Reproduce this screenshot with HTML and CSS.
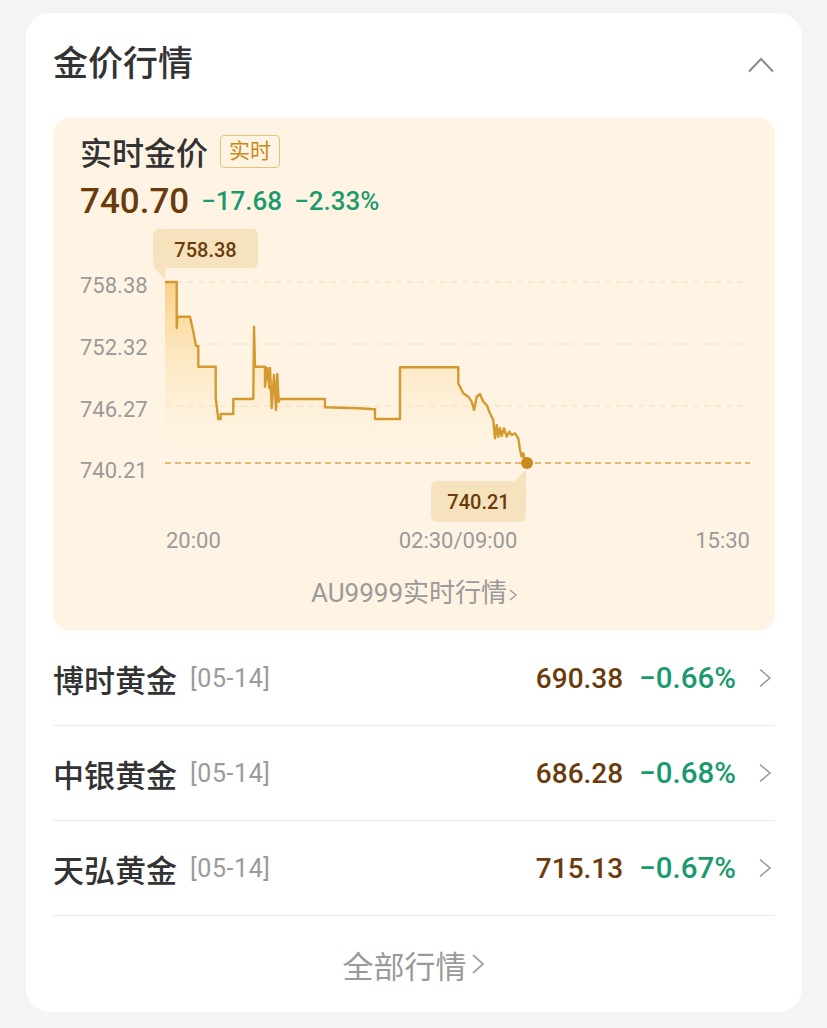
FILE: index.html
```html
<!DOCTYPE html>
<html lang="zh-CN">
<head>
  <meta charset="UTF-8" />
  <meta name="viewport" content="width=device-width, initial-scale=1" />
  <title>金价行情</title>
  <link rel="stylesheet" href="styles.css">
</head>
<body>
  <div class="card">
    <div class="card-head">
      <h2 class="card-title">金价行情</h2>
      <svg class="fold" width="26" height="16" viewBox="0 0 26 16">
        <polyline points="1,14.5 13,2 25,14.5" fill="none" stroke="#8c8c8c" stroke-width="2" />
      </svg>
    </div>

    <div class="live">
      <div class="live-head">
        <span class="live-title">实时金价</span>
        <span class="tag">实时</span>
      </div>
      <div class="live-price">
        <span class="now">740.70</span>
        <span class="chg">−17.68</span>
        <span class="chg">−2.33%</span>
      </div>

      <svg class="chart" width="670" height="300" viewBox="0 0 670 300">
        <defs>
          <linearGradient id="area" x1="0" y1="56" x2="0" y2="237" gradientUnits="userSpaceOnUse">
            <stop offset="0" stop-color="#f7c56a" stop-opacity="0.75" />
            <stop offset="0.7" stop-color="#fbe2b0" stop-opacity="0.2" />
            <stop offset="1" stop-color="#fff4e3" stop-opacity="0" />
          </linearGradient>
        </defs>
        <g class="grid">
          <line x1="85" y1="56" x2="670" y2="56" />
          <line x1="85" y1="118" x2="670" y2="118" />
          <line x1="85" y1="180" x2="670" y2="180" />
        </g>
        <g class="ylab">
          <text x="0" y="67">758.38</text>
          <text x="0" y="129">752.32</text>
          <text x="0" y="191">746.27</text>
          <text x="0" y="252">740.21</text>
        </g>
        <path class="area" d="M85,56 L96.7,56 L96.7,102 L97.5,90.7 L110,90.7 L113.3,105.7 L116,120 L118.3,120 L118.3,140.7 L135.7,140.7 L135.7,172 L138.3,193 L140.7,193 L140.7,188 L153.3,188 L153.3,173 L173.3,173 L174,100.7 L175,140.7 L185,140.7 L185,160.7 L187.3,142 L189.3,162 L190,142 L191.7,182 L194,149 L196,184 L197.3,148 L198.7,175.7 L200,173 L245,173 L245,181.3 L278.3,182.3 L295,183.3 L295,193 L320,193 L320,141.3 L378.3,141.3 L378.3,157.3 L383.3,167.3 L388.3,170.7 L391.7,175.7 L394,184 L396.7,170.7 L400,168 L403.3,175.7 L406.7,179 L410,187.3 L413.3,194 L415,212.3 L416.7,199 L418.3,210.7 L420,202.3 L421.7,210 L424,202.3 L426.7,210.7 L429.3,205.7 L431.7,209 L435,207.3 L438.3,212.3 L440,224 L441.7,230.7 L443.3,227.3 L445,235.7 L447,237 L447,240 L85,240 Z" />
        <path class="base" d="M85,237 L670,237" />
        <path class="line" d="M85,56 L96.7,56 L96.7,102 L97.5,90.7 L110,90.7 L113.3,105.7 L116,120 L118.3,120 L118.3,140.7 L135.7,140.7 L135.7,172 L138.3,193 L140.7,193 L140.7,188 L153.3,188 L153.3,173 L173.3,173 L174,100.7 L175,140.7 L185,140.7 L185,160.7 L187.3,142 L189.3,162 L190,142 L191.7,182 L194,149 L196,184 L197.3,148 L198.7,175.7 L200,173 L245,173 L245,181.3 L278.3,182.3 L295,183.3 L295,193 L320,193 L320,141.3 L378.3,141.3 L378.3,157.3 L383.3,167.3 L388.3,170.7 L391.7,175.7 L394,184 L396.7,170.7 L400,168 L403.3,175.7 L406.7,179 L410,187.3 L413.3,194 L415,212.3 L416.7,199 L418.3,210.7 L420,202.3 L421.7,210 L424,202.3 L426.7,210.7 L429.3,205.7 L431.7,209 L435,207.3 L438.3,212.3 L440,224 L441.7,230.7 L443.3,227.3 L445,235.7 L447,237" />
        <circle class="dot" cx="447" cy="237" r="6" />

        <g class="tip">
          <polygon points="73,40 86,40 85,54" />
          <rect x="73" y="3" width="105" height="39" rx="6" />
          <text x="125.5" y="31">758.38</text>
        </g>
        <g class="tip">
          <polygon points="433,257 446,257 446,244" />
          <rect x="351" y="255" width="95" height="41" rx="6" />
          <text x="398.5" y="283">740.21</text>
        </g>
      </svg>

      <div class="xlab">
        <span>20:00</span>
        <span>02:30/09:00</span>
        <span>15:30</span>
      </div>

      <div class="live-link">AU9999实时行情<svg width="12" height="16" viewBox="0 0 12 16"><polyline points="3,3 9,8 3,13" fill="none" stroke="#a0a0a0" stroke-width="1.5" /></svg></div>
    </div>

    <div class="row">
      <span class="name">博时黄金</span>
      <span class="date">[05-14]</span>
      <span class="price">690.38</span>
      <span class="pct">−0.66%</span>
      <svg class="arrow" width="14" height="20" viewBox="0 0 14 20"><polyline points="2,1.5 12,10 2,18.5" fill="none" stroke="#9a9a9a" stroke-width="1.6" /></svg>
    </div>
    <div class="row">
      <span class="name">中银黄金</span>
      <span class="date">[05-14]</span>
      <span class="price">686.28</span>
      <span class="pct">−0.68%</span>
      <svg class="arrow" width="14" height="20" viewBox="0 0 14 20"><polyline points="2,1.5 12,10 2,18.5" fill="none" stroke="#9a9a9a" stroke-width="1.6" /></svg>
    </div>
    <div class="row">
      <span class="name">天弘黄金</span>
      <span class="date">[05-14]</span>
      <span class="price">715.13</span>
      <span class="pct">−0.67%</span>
      <svg class="arrow" width="14" height="20" viewBox="0 0 14 20"><polyline points="2,1.5 12,10 2,18.5" fill="none" stroke="#9a9a9a" stroke-width="1.6" /></svg>
    </div>

    <div class="more">全部行情<svg width="16" height="22" viewBox="0 0 16 22"><polyline points="3,2 13,11 3,20" fill="none" stroke="#a0a0a0" stroke-width="1.7" /></svg></div>
  </div>
</body>
</html>
```

FILE: styles.css
```css
body {
  margin: 0;
  padding: 13px 0 16px;
  background: #f4f4f4;
  font-family: Roboto, "Noto Sans CJK SC", sans-serif;
  color: #333;
}
.card {
  margin: 0 25px 0 26px;
  padding: 0 27px;
  background: #fff;
  border-radius: 24px;
}
.card-head {
  height: 104px;
  display: flex;
  align-items: center;
  justify-content: space-between;
}
.card-title {
  margin: 0;
  font-size: 35px;
  font-weight: 500;
  color: #333;
  line-height: 44px;
}
.fold {
  display: block;
  margin-right: 1px;
}

/* live price panel */
.live {
  background: #fff4e3;
  border-radius: 18px;
  padding: 17px 25px 21px 27px;
}
.live-head {
  display: flex;
  align-items: center;
  height: 34px;
}
.live-title {
  font-size: 32px;
  font-weight: 500;
  color: #333;
}
.tag {
  margin-left: 12px;
  padding: 0 8px;
  height: 31px;
  line-height: 31px;
  font-size: 21px;
  color: #c8891a;
  border: 1px solid #e6c27c;
  border-radius: 4px;
}
.live-price {
  margin-top: 13px;
  height: 40px;
  display: flex;
  align-items: center;
}
.now {
  font-size: 35px;
  font-weight: 500;
  color: #6b3b0c;
  margin-right: 12px;
}
.chg {
  font-size: 26px;
  font-weight: 500;
  color: #1b9a6f;
  margin-right: 12px;
}
.chart {
  display: block;
  margin-top: 5px;
}
.grid line {
  stroke: #f2dfbd;
  stroke-width: 1;
  stroke-dasharray: 6 5;
}
.ylab text {
  font-size: 22px;
  fill: #9a9a9a;
}
.area {
  fill: url(#area);
}
.base {
  stroke: #dfa54a;
  stroke-width: 1.6;
  stroke-dasharray: 6 4;
  fill: none;
}
.line {
  fill: none;
  stroke: #d49a30;
  stroke-width: 2.4;
  stroke-linejoin: round;
}
.dot {
  fill: #c98a1e;
}
.tip rect,
.tip polygon {
  fill: #f6e2bd;
}
.tip text {
  font-size: 20px;
  font-weight: 500;
  fill: #6b3b0c;
  text-anchor: middle;
}
.xlab {
  display: flex;
  justify-content: space-between;
  padding-left: 86px;
  line-height: 30px;
  font-size: 22px;
  color: #9a9a9a;
}
.live-link {
  margin-top: 20px;
  line-height: 34px;
  font-size: 26px;
  color: #9a9a9a;
  text-align: center;
}
.live-link svg {
  vertical-align: -1px;
}

/* fund rows */
.row {
  height: 94px;
  display: flex;
  align-items: center;
  border-bottom: 1px solid #ededed;
}
.name {
  font-size: 31px;
  font-weight: 500;
  color: #333;
}
.date {
  margin-left: 13px;
  font-size: 25px;
  letter-spacing: 0.6px;
  color: #9a9a9a;
}
.price {
  margin-left: auto;
  font-size: 28px;
  font-weight: 500;
  color: #6b3b0c;
}
.pct {
  margin-left: 16px;
  font-size: 29.5px;
  font-weight: 500;
  color: #1b9a6f;
}
.arrow {
  display: block;
  margin-left: 22px;
  margin-right: 3px;
}
.more {
  height: 96px;
  display: flex;
  align-items: center;
  justify-content: center;
  font-size: 31px;
  color: #9a9a9a;
}
.more svg {
  margin-left: 3px;
}
```
